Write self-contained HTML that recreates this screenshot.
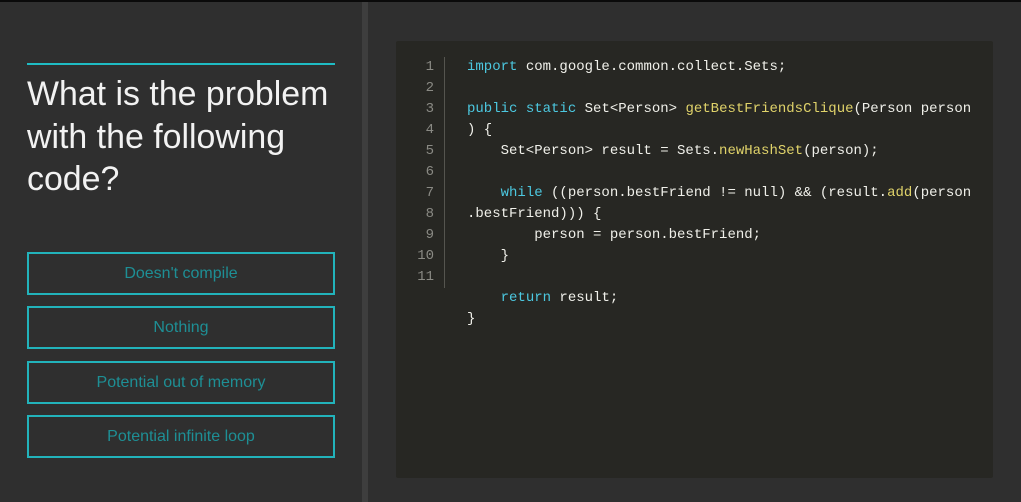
<!DOCTYPE html>
<html><head><style>
*{margin:0;padding:0;box-sizing:border-box}
body{width:1021px;height:502px;background:#2f2f2f;position:relative;overflow:hidden;font-family:"Liberation Sans",sans-serif}
.top{position:absolute;left:0;top:0;width:1021px;height:2px;background:#0a0a0a}
.div{position:absolute;left:362px;top:2px;width:6px;height:500px;background:#3e3e3e}
.rule{position:absolute;left:27px;top:63px;width:308px;height:2px;background:#1fbcc4;z-index:5}
h1{position:absolute;left:27px;top:73px;width:330px;font-weight:normal;color:#f2f2f2;font-size:33.9px;line-height:42.5px}
.btn{position:absolute;left:27px;width:308px;height:43px;border:2px solid #22b3bb;color:#1e8f95;font-size:16px;text-align:center;line-height:39px}
.code{position:absolute;left:396px;top:41px;width:597px;height:437px;background:#272723;border-radius:2px}
.gut{position:absolute;left:0;top:16px;width:49px;border-right:1px solid #55554f;height:231px}
pre{position:absolute;left:71px;top:16px;font-family:"Liberation Mono",monospace;font-size:14px;line-height:21px;color:#f0f0ea}
.k{color:#4cc8e0}.f{color:#e0d36a}
</style></head><body>
<div class="top"></div>
<div class="div"></div>
<div class="rule"></div>
<h1>What is the problem with the following code?</h1>
<div class="btn" style="top:252px">Doesn't compile</div>
<div class="btn" style="top:306px">Nothing</div>
<div class="btn" style="top:361px">Potential out of memory</div>
<div class="btn" style="top:415px">Potential infinite loop</div>
<div class="code">
<div class="gut">
<pre style="left:auto;right:10px;top:0;color:#8a8a84;text-align:right;font-size:14px">1
2
3
4
5
6
7
8
9
10
11</pre>
</div>
<pre><span class="k">import</span> com.google.common.collect.Sets;

<span class="k">public</span> <span class="k">static</span> Set&lt;Person&gt; <span class="f">getBestFriendsClique</span>(Person person
) {
    Set&lt;Person&gt; result = Sets.<span class="f">newHashSet</span>(person);

    <span class="k">while</span> ((person.bestFriend != null) &amp;&amp; (result.<span class="f">add</span>(person
.bestFriend))) {
        person = person.bestFriend;
    }

    <span class="k">return</span> result;
}</pre>
</div>
</body></html>
